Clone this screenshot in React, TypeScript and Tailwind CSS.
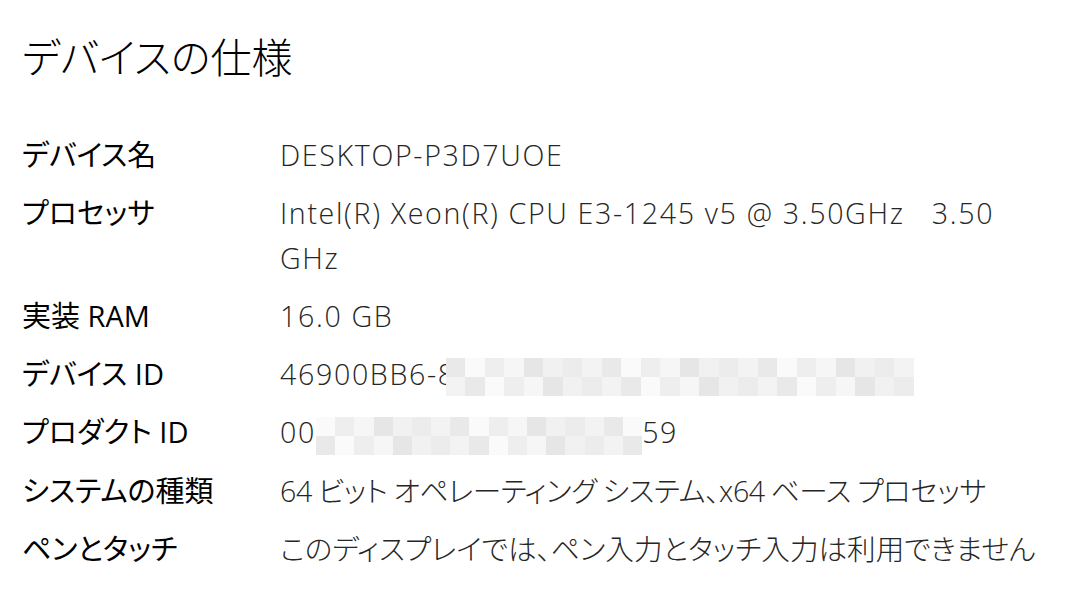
import React from 'react';

const shades = ['#f1f1f1', '#e9e9e9', '#f6f6f6', '#ececec', '#fafafa', '#e6e6e6', '#f3f3f3', '#eeeeee'];

// pixelated cover over the hidden parts of the IDs
const Mosaic: React.FC<{ cols: number; seed: number; blockW: number }> = ({ cols, seed, blockW }) => {
  const rows = [0, 1];
  return (
    <span className="inline-flex flex-col align-middle">
      {rows.map((r) => (
        <span key={r} className="flex">
          {Array.from({ length: cols }).map((_, i) => (
            <span
              key={i}
              className="block h-[19px]"
              style={{ width: blockW, backgroundColor: shades[(i * 3 + r * 5 + seed) % shades.length] }}
            />
          ))}
        </span>
      ))}
    </span>
  );
};

const Latin: React.FC<{ children: React.ReactNode }> = ({ children }) => (
  <span className="tracking-[1.65px]">{children}</span>
);

const rows: { label: React.ReactNode; key: string; value: React.ReactNode }[] = [
  { key: 'name', label: 'デバイス名', value: <Latin>DESKTOP-P3D7UOE</Latin> },
  {
    key: 'cpu',
    label: 'プロセッサ',
    value: (
      <Latin>
        {'Intel(R) Xeon(R) CPU E3-1245 v5 @ 3.50GHz   3.50'}
        <br />
        GHz
      </Latin>
    ),
  },
  { key: 'ram', label: '実装 RAM', value: <Latin>16.0 GB</Latin> },
  {
    key: 'devid',
    label: 'デバイス ID',
    value: (
      <>
        <Latin>46900BB6-</Latin>
        <span className="inline-block w-[8px] overflow-hidden align-top">8</span>
        <Mosaic cols={24} seed={1} blockW={19.5} />
      </>
    ),
  },
  {
    key: 'prodid',
    label: 'プロダクト ID',
    value: (
      <>
        <Latin>00</Latin>
        <Mosaic cols={17} seed={4} blockW={19.2} />
        <Latin>59</Latin>
      </>
    ),
  },
  {
    key: 'type',
    label: 'システムの種類',
    value: (
      <span className="tracking-[-0.4px] [word-spacing:-1px]">
        64 ビット オペレーティング システム、x64 ベース プロセッサ
      </span>
    ),
  },
  { key: 'pen', label: 'ペンとタッチ', value: 'このディスプレイでは、ペン入力とタッチ入力は利用できません' },
];

export default function App() {
  return (
    <div className="min-h-screen w-full bg-white pl-[22px] pt-[29px] font-['Open_Sans','Noto_Sans_CJK_JP',sans-serif] [font-feature-settings:'palt']">
      <h1 className="text-[41px] leading-[56px] font-light text-black">デバイスの仕様</h1>
      <div className="mt-[47px] grid grid-cols-[258px_1fr] gap-y-[13px] leading-[45px]">
        {rows.map((row) => (
          <React.Fragment key={row.key}>
            <div className="text-[29px] text-black whitespace-nowrap">{row.label}</div>
            <div className="text-[28.6px] font-light text-[#262626] whitespace-pre">{row.value}</div>
          </React.Fragment>
        ))}
      </div>
    </div>
  );
}
